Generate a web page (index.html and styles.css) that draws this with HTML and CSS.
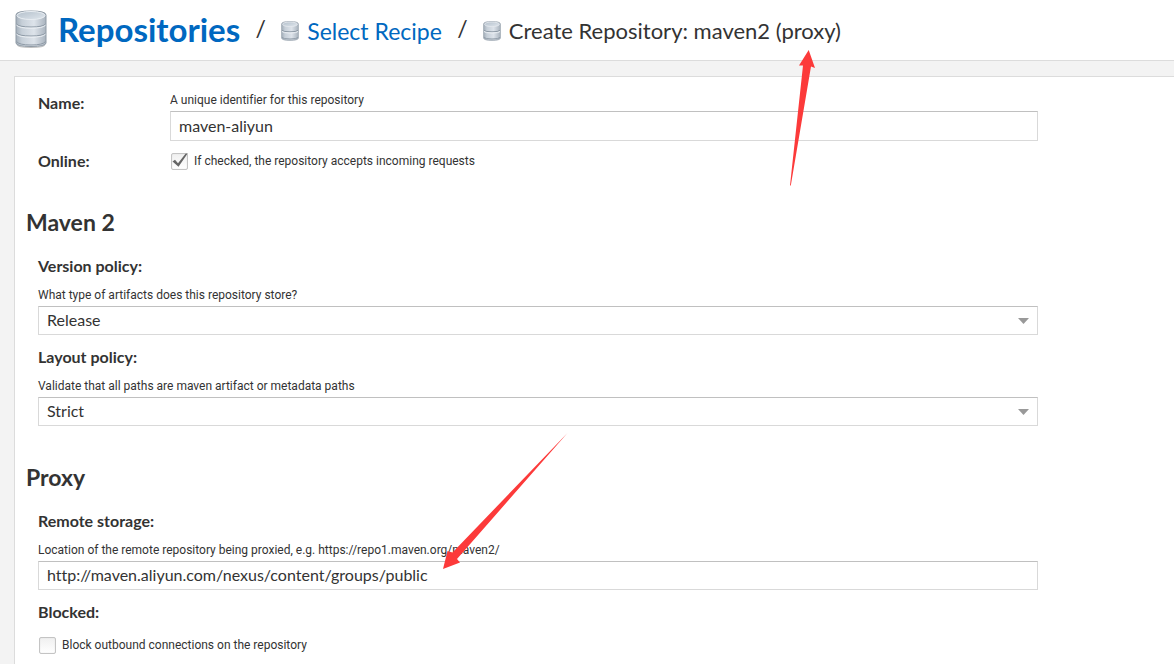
FILE: index.html
```html
<!DOCTYPE html>
<html lang="en">
<head>
<meta charset="utf-8">
<meta name="viewport" content="width=device-width, initial-scale=1">
<title>Create Repository</title>
<link rel="stylesheet" href="styles.css">
</head>
<body>
<svg class="defs" width="0" height="0" aria-hidden="true">
  <defs>
    <linearGradient id="metal" x1="0" x2="1" y1="0" y2="0">
      <stop offset="0" stop-color="#a4afba"/>
      <stop offset="0.2" stop-color="#c6cfd8"/>
      <stop offset="0.6" stop-color="#dde3ea"/>
      <stop offset="1" stop-color="#a9b3be"/>
    </linearGradient>
    <linearGradient id="lid" x1="0" x2="1" y1="0" y2="1">
      <stop offset="0" stop-color="#b4c0cb"/>
      <stop offset="1" stop-color="#dfe6ed"/>
    </linearGradient>
    <symbol id="db-large" viewBox="0 0 32 38">
      <path d="M2 34q0 3 14 3t14-3v1q0 3-14 3T2 35z" fill="#000" opacity="0.25"/>
      <path d="M1 5Q1 1 16 1t15 4v28q0 3.500-15 3.500T1 33z" fill="url(#metal)" stroke="#8f9aa5"/>
      <ellipse cx="16" cy="5.500" rx="14" ry="4" fill="url(#lid)" stroke="#e8edf2"/>
      <path d="M1.500 14Q4 17 16 17t14.500-3M1.500 23Q4 26 16 26t14.500-3M1.500 31.500Q4 35 16 35t14.500-3.500" fill="none" stroke="#8e9aa6"/>
      <path d="M1.500 15.200Q4 18.200 16 18.200t14.500-3M1.500 24.200Q4 27.200 16 27.200t14.500-3" fill="none" stroke="#edf1f5"/>
    </symbol>
    <symbol id="db-small" viewBox="0 0 18 20">
      <path d="M.7 3Q.7.600 9 .600T17.300 3v14q0 2.300-8.300 2.300T.7 17z" fill="url(#metal)" stroke="#a3adb7"/>
      <ellipse cx="9" cy="3.300" rx="7.400" ry="2.300" fill="url(#lid)" stroke="#e4e9ee" stroke-width="0.800"/>
      <path d="M1 9.300q1 1.500 8 1.500t8-1.500M1 16.500Q2 18 9 18t8-1.500" fill="none" stroke="#8e9aa6"/>
      <path d="M1 10.500Q2 12 9 12t8-1.500" fill="none" stroke="#edf1f5"/>
    </symbol>
  </defs>
</svg>

<header class="header">
  <nav class="crumbs" aria-label="Breadcrumb">
    <a class="crumb crumb-root" href="#"><svg class="icon-large" aria-hidden="true"><use href="#db-large"/></svg>Repositories</a>
    <span class="slash">/</span>
    <a class="crumb" href="#"><svg class="icon-small" aria-hidden="true"><use href="#db-small"/></svg>Select Recipe</a>
    <span class="slash">/</span>
    <span class="crumb crumb-current"><svg class="icon-small" aria-hidden="true"><use href="#db-small"/></svg>Create Repository: maven2 (proxy)</span>
  </nav>
</header>

<main class="content">
  <form class="panel">
    <div class="fields fields-basic">
      <div class="row">
        <label class="label" for="name">Name:</label>
        <div class="control">
          <span class="help" id="name-help">A unique identifier for this repository</span>
          <input class="box box-name" id="name" type="text" value="maven-aliyun" aria-describedby="name-help">
        </div>
      </div>
      <div class="row row-online">
        <span class="label">Online:</span>
        <label class="check">
          <span class="tick-wrap">
            <input class="tick" type="checkbox" checked>
            <svg class="tick-mark" viewBox="0 0 17 17" aria-hidden="true"><path d="M1.500 8.500L4 6.800l3 3.400L14.500.800l2.300-.6L7.500 13.800z" fill="#666"/></svg>
          </span>
          If checked, the repository accepts incoming requests
        </label>
      </div>
    </div>

    <h2 class="section">Maven 2</h2>
    <div class="fields">
      <div class="field">
        <label class="label" for="version">Version policy:</label>
        <span class="help">What type of artifacts does this repository store?</span>
        <div class="select-wrap">
          <select class="box" id="version"><option>Release</option><option>Snapshot</option><option>Mixed</option></select>
          <svg class="arrow-down" viewBox="0 0 11 6" aria-hidden="true"><path d="M0 0h11L5.500 6z" fill="#999"/></svg>
        </div>
      </div>
      <div class="field">
        <label class="label" for="layout">Layout policy:</label>
        <span class="help">Validate that all paths are maven artifact or metadata paths</span>
        <div class="select-wrap">
          <select class="box" id="layout"><option>Strict</option><option>Permissive</option></select>
          <svg class="arrow-down" viewBox="0 0 11 6" aria-hidden="true"><path d="M0 0h11L5.500 6z" fill="#999"/></svg>
        </div>
      </div>
    </div>

    <h2 class="section">Proxy</h2>
    <div class="fields">
      <div class="field">
        <label class="label" for="remote">Remote storage:</label>
        <span class="help">Location of the remote repository being proxied, e.g. https://repo1.maven.org/maven2/</span>
        <input class="box" id="remote" type="text" value="http://maven.aliyun.com/nexus/content/groups/public">
      </div>
      <div class="field">
        <span class="label">Blocked:</span>
        <label class="check">
          <span class="tick-wrap"><input class="tick" type="checkbox"></span>
          Block outbound connections on the repository
        </label>
      </div>
    </div>
  </form>
</main>

<svg class="pointer pointer-title" viewBox="0 0 26 136" aria-hidden="true"><path d="M18.700 0L25 18l-4-1.500L.8 135.500H0L13 15.500H9z" fill="#fc3a3a"/></svg>
<svg class="pointer pointer-url" viewBox="0 0 125 137" aria-hidden="true"><path d="M0 136L4.500 118l5 1.500L124.500 0 14 126l3 3.500z" fill="#fc3a3a"/></svg>
</body>
</html>
```
FILE: styles.css
```css
* {
  box-sizing: border-box;
}

body {
  margin: 0;
  min-height: 100vh;
  display: flex;
  flex-direction: column;
  background: #f3f3f3;
  color: #333;
  font-family: Lato, "Open Sans", sans-serif;
  font-size: 12px;
  font-variant-ligatures: none;
  position: relative;
}

.defs {
  position: absolute;
}

.header {
  background: #fff;
  border-bottom: 1px solid #dcdcdc;
  padding: 0 15px;
}

.crumbs {
  display: flex;
  align-items: center;
  height: 60px;
}

.crumb {
  display: flex;
  align-items: center;
  gap: 8px;
  color: #0068c0;
  font-size: 23px;
  line-height: 28px;
  padding-top: 2px;
  text-decoration: none;
  white-space: nowrap;
}

.crumb-root {
  gap: 11px;
  font-size: 33px;
  line-height: 36px;
  font-weight: 700;
  padding: 0 0 3px;
}

.crumb-current {
  color: #333;
  font-size: 22px;
}

.slash {
  width: 41px;
  padding-bottom: 4px;
  text-align: center;
  font-size: 23px;
  line-height: 28px;
}

.icon-large {
  width: 32px;
  height: 38px;
}

.icon-small {
  width: 18px;
  height: 20px;
}

.content {
  flex: 1;
  display: flex;
  padding: 15px 0 0 14px;
}

.panel {
  flex: 1;
  background: #fff;
  border: 1px solid #dcdcdc;
  border-width: 1px 0 0 1px;
  padding: 14px 12px 8px 11px;
}

.fields {
  max-width: 1012px;
  padding-left: 12px;
  display: flex;
  flex-direction: column;
  gap: 12px;
}

.fields-basic {
  gap: 10px;
}

.row {
  display: flex;
}

.row > .label {
  flex: 0 0 132px;
}

.row:not(.row-online) > .label {
  padding-top: 2px;
}

.control {
  flex: 1;
}

.label {
  display: block;
  font-size: 16px;
  line-height: 20px;
  font-weight: 700;
}

.help,
.check {
  font-family: Roboto, Lato, sans-serif;
}

.help {
  display: block;
  line-height: 18px;
  margin-bottom: 2px;
}

.field > .help {
  margin-top: 10px;
}

.field > .check {
  margin-top: 13px;
}

.box {
  display: block;
  width: 100%;
  height: 29px;
  padding: 0 8px 2px;
  margin: 0;
  border: 1px solid #d9d9d9;
  border-top-color: #c0c0c0;
  border-radius: 0;
  background: #fff;
  color: #333;
  font-family: inherit;
  font-size: 16px;
  font-variant-ligatures: none;
  appearance: none;
}

.box-name {
  height: 30px;
}

.select-wrap,
.tick-wrap {
  position: relative;
}

.arrow-down {
  position: absolute;
  right: 9px;
  top: 12px;
  width: 11px;
  height: 6px;
  pointer-events: none;
}

.check {
  display: flex;
  align-items: center;
  gap: 6px;
  padding-left: 1px;
  line-height: 20px;
}

.tick-wrap {
  display: block;
  width: 17px;
  height: 17px;
}

.tick {
  display: block;
  width: 17px;
  height: 17px;
  margin: 0;
  appearance: none;
  border: 1px solid #c4c4c4;
  border-radius: 2px;
  background: linear-gradient(#f0f0f0, #fff);
  box-shadow: inset 0 0 1px #ccc;
}

.tick-mark {
  position: absolute;
  inset: 0;
  pointer-events: none;
}

.section {
  margin: 37px 0 20px;
  font-size: 23px;
  line-height: 28px;
  font-weight: 700;
}

.pointer {
  position: absolute;
  pointer-events: none;
}

.pointer-title {
  left: 790px;
  top: 50px;
  width: 26px;
  height: 136px;
}

.pointer-url {
  left: 443px;
  top: 433px;
  width: 125px;
  height: 137px;
}
```
